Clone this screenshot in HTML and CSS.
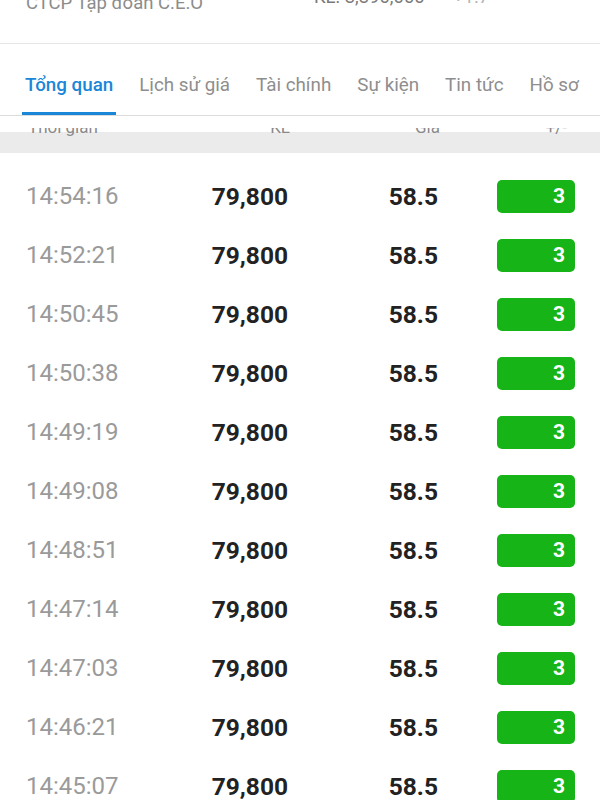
FILE: index.html
```html
<!DOCTYPE html>
<html>

<head>
    <meta name="viewport" content="width=device-width, initial-scale=1.0">
    <title>CEO - Khớp lệnh</title>
    <link rel="stylesheet" href="styles.css">
</head>

<body>

    <div class="info">
        <span class="info-name">CTCP Tập đoàn C.E.O</span>
        <span class="info-vol">KL: 3,390,000</span>
        <span class="info-change">+1.7</span>
        <span class="info-pct">3</span>
    </div>

    <ul class="tabs">
        <li class="tab active">Tổng quan</li>
        <li class="tab">Lịch sử giá</li>
        <li class="tab">Tài chính</li>
        <li class="tab">Sự kiện</li>
        <li class="tab">Tin tức</li>
        <li class="tab">Hồ sơ</li>
        <li class="tab">Cổ đông</li>
    </ul>

    <div class="thead">
        <span>Thời gian</span>
        <span class="num">KL</span>
        <span class="num">Giá</span>
        <span class="num pm">+/-</span>
    </div>

    <ul class="trades">
        <li class="trade"><span class="time">14:54:16</span><span class="num val">79,800</span><span class="num val">58.5</span><span class="badge">3</span></li>
        <li class="trade"><span class="time">14:52:21</span><span class="num val">79,800</span><span class="num val">58.5</span><span class="badge">3</span></li>
        <li class="trade"><span class="time">14:50:45</span><span class="num val">79,800</span><span class="num val">58.5</span><span class="badge">3</span></li>
        <li class="trade"><span class="time">14:50:38</span><span class="num val">79,800</span><span class="num val">58.5</span><span class="badge">3</span></li>
        <li class="trade"><span class="time">14:49:19</span><span class="num val">79,800</span><span class="num val">58.5</span><span class="badge">3</span></li>
        <li class="trade"><span class="time">14:49:08</span><span class="num val">79,800</span><span class="num val">58.5</span><span class="badge">3</span></li>
        <li class="trade"><span class="time">14:48:51</span><span class="num val">79,800</span><span class="num val">58.5</span><span class="badge">3</span></li>
        <li class="trade"><span class="time">14:47:14</span><span class="num val">79,800</span><span class="num val">58.5</span><span class="badge">3</span></li>
        <li class="trade"><span class="time">14:47:03</span><span class="num val">79,800</span><span class="num val">58.5</span><span class="badge">3</span></li>
        <li class="trade"><span class="time">14:46:21</span><span class="num val">79,800</span><span class="num val">58.5</span><span class="badge">3</span></li>
        <li class="trade"><span class="time">14:45:07</span><span class="num val">79,800</span><span class="num val">58.5</span><span class="badge">3</span></li>
    </ul>

</body>

</html>
```

FILE: styles.css
```css
body {
    margin: 0;
    height: 800px;
    overflow: hidden;
    background: #fff;
    font-family: Roboto, "Noto Sans", sans-serif;
}

/* header row, scrolled mostly off screen */
.info {
    display: grid;
    grid-template-columns: 288px 139px 1fr auto;
    height: 43px;
    padding: 0 27px 0 26px;
    overflow: hidden;
    border-bottom: 1px solid #e6e6e6;
    font-size: 18.5px;
    line-height: 22px;
    color: #8c8c8c;
}

.info>span {
    margin-top: -14px;
    white-space: nowrap;
}

.info>.info-name {
    margin-top: -8px;
}

.info-vol {
    color: #7a7a7a;
}

.info-change {
    color: #b5b5b5;
}

.info>.info-pct {
    margin-top: -17px;
    color: #17b317;
    font-weight: bold;
}

.tabs {
    list-style-type: none;
    margin: 0;
    padding: 0 0 0 22px;
    display: flex;
    gap: 20px;
    overflow: hidden;
    white-space: nowrap;
    border-bottom: 1.5px solid #dcdcdc;
}

.tab {
    padding: 29px 3px 15px;
    font-size: 18.8px;
    line-height: 24px;
    color: #8e8e8e;
    border-bottom: 3px solid transparent;
}

.tab.active {
    color: #1a86d8;
    font-weight: 500;
    border-bottom-color: #1a86d8;
}

.thead {
    display: grid;
    grid-template-columns: 150px 112px 150px 1fr;
    margin-top: 12px;
    height: 25px;
    padding: 0 24px 0 28px;
    overflow: hidden;
    background: linear-gradient(#fff 0 4px, #ebebeb 4px);
    font-size: 17px;
    line-height: 20px;
    color: #8a8a8a;
}

.thead>span {
    margin-top: -11px;
}

.thead .pm {
    padding-right: 9px;
}

.num {
    text-align: right;
}

.trades {
    list-style-type: none;
    margin: 0;
    padding: 13.5px 0 0;
}

.trade {
    display: grid;
    grid-template-columns: 150px 112px 150px 1fr;
    align-items: center;
    height: 59px;
    padding: 0 25px 0 26px;
}

.time {
    font-size: 24px;
    color: #9a9a9a;
}

.val {
    font-size: 24.5px;
    font-weight: bold;
    color: #222;
}

.badge {
    justify-self: end;
    width: 78px;
    height: 33px;
    box-sizing: border-box;
    padding-right: 10px;
    border-radius: 5px;
    background: #16b416;
    color: #fff;
    font-size: 21px;
    font-weight: bold;
    line-height: 33px;
    text-align: right;
}
```
